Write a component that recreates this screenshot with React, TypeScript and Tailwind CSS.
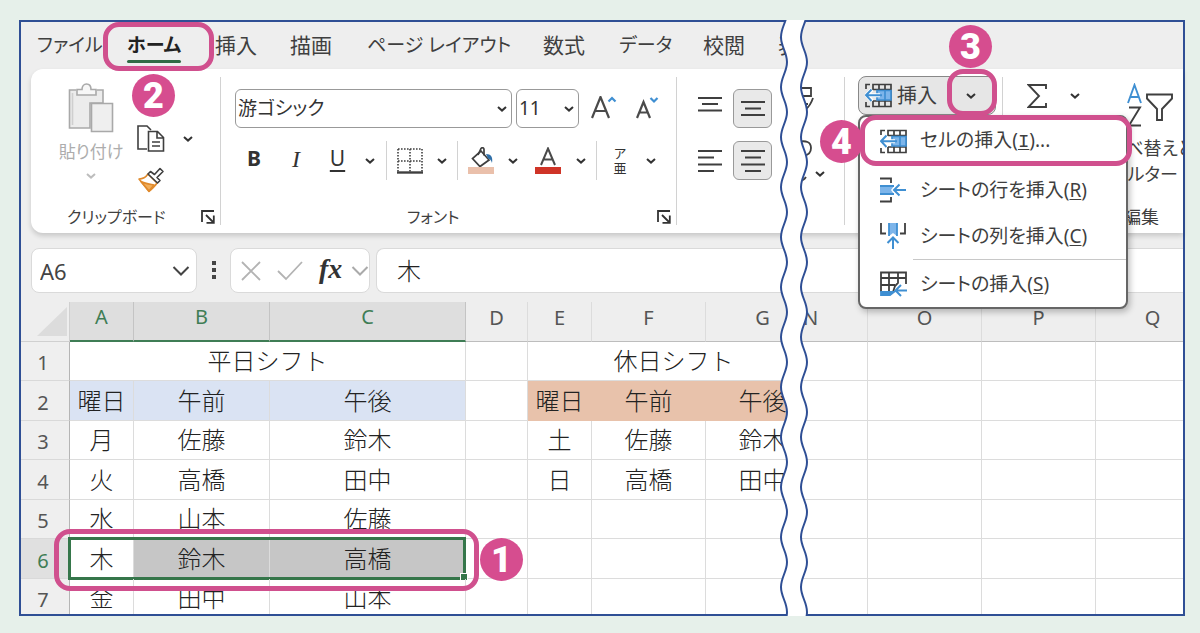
import type { ReactNode } from 'react'
import clsx from 'clsx'

const BLUE = '#3f8fd2'
const INK = '#3f3f3f'

const tabs = [
  { name: 'ファイル', kana: true },
  { name: 'ホーム', kana: true },
  { name: '挿入' },
  { name: '描画' },
  { name: 'ページ レイアウト', kana: true },
  { name: '数式' },
  { name: 'データ', kana: true },
  { name: '校閲' },
  { name: '表示' },
]

type Row = { n: number; week: string[]; holiday: string[] }

const rows: Row[] = [
  { n: 2, week: ['曜日', '午前', '午後'], holiday: ['曜日', '午前', '午後'] },
  { n: 3, week: ['月', '佐藤', '鈴木'], holiday: ['土', '佐藤', '鈴木'] },
  { n: 4, week: ['火', '高橋', '田中'], holiday: ['日', '高橋', '田中'] },
  { n: 5, week: ['水', '山本', '佐藤'], holiday: ['', '', ''] },
  { n: 6, week: ['木', '鈴木', '高橋'], holiday: ['', '', ''] },
  { n: 7, week: ['金', '田中', '山本'], holiday: ['', '', ''] },
]

function rowHeight(n: number) {
  return n % 2 === 0 ? 'h-10' : 'h-[39px]'
}

/* Callouts */

function Ring({ className }: { className: string }) {
  return <span className={clsx('pointer-events-none absolute z-20 rounded-2xl border-[5px] border-[#d0508e]', className)} />
}

function Badge({ n, className }: { n: number; className: string }) {
  return (
    <span
      className={clsx(
        'pointer-events-none absolute z-20 flex size-[43px] items-center justify-center rounded-full bg-[#d64d8f] font-[Roboto,sans-serif] text-[36px] leading-none font-black text-white',
        className,
      )}
    >
      {n}
    </span>
  )
}

/* Icons */

function Chevron({ className = 'text-[#333]' }: { className?: string }) {
  return (
    <svg width="12" height="8" viewBox="0 0 12 8" fill="none" stroke="currentColor" strokeWidth="2" className={clsx('shrink-0', className)}>
      <path d="M2 2l4 3.6L10 2" />
    </svg>
  )
}

function WideChevron({ className }: { className: string }) {
  return (
    <svg width="18" height="12" viewBox="0 0 18 12" fill="none" stroke="currentColor" strokeWidth="2" className={clsx('shrink-0', className)}>
      <path d="M1.5 2L9 9.5 16.5 2" />
    </svg>
  )
}

function Launcher() {
  return (
    <svg width="14" height="14" viewBox="0 0 14 14" fill="none" stroke="#333" strokeWidth="1.8">
      <path d="M1 12V1h12M5 5l7 7M12.8 5.500V12.800H5.500" />
    </svg>
  )
}

function PasteIcon() {
  return (
    <svg width="46" height="50" viewBox="0 0 46 50" fill="none" stroke="#a9a9a9" strokeWidth="1.6">
      <path d="M8 7H1.500v38H22V20h13V7h-6" fill="#ececec" />
      <path d="M4.500 10v32" stroke="#cfcfcf" />
      <path d="M9 12V6.500h5C14 3 16 1 18.500 1S23 3 23 6.500h5V12z" fill="#f7f7f7" />
      <path d="M23.500 20.500h21v28h-21z" fill="#efefef" />
    </svg>
  )
}

function CopyIcon() {
  return (
    <svg width="28" height="28" viewBox="0 0 28 28" fill="none" stroke={INK} strokeWidth="1.6">
      <path d="M10 24H1V1h9l4 4" />
      <path d="M11.500 6.500h9l6 6V26h-15zM20 6.500V13h6.500M15 17h8M15 21h8" />
    </svg>
  )
}

function BrushIcon() {
  return (
    <svg width="28" height="26" viewBox="0 0 28 26" fill="none" strokeWidth="1.600" strokeLinejoin="round">
      <path d="M2 12c4 0 7-2 9-5l9 9c-2 3-4 5-8 8.500z" fill="#fff" stroke="#e08a2c" />
      <path d="M4 14.500c4 2 8 2.500 13 3.500l-5 6z" fill="#f2ae5a" stroke="#e08a2c" />
      <path d="M11 7l2.500-2.500 4 3L23 1.500l3 3-6 6 3 3-2.500 2.500z" fill="#fff" stroke={INK} />
    </svg>
  )
}

function BordersIcon() {
  return (
    <svg width="26" height="26" viewBox="0 0 26 26" fill="none" stroke={INK} strokeWidth="1.600">
      <path d="M1 1h24M1 13h24M1 1v23M13 1v23M25 1v23" strokeDasharray="1.600 1.400" />
      <path d="M0 24.500h26" strokeWidth="2.400" />
    </svg>
  )
}

function BucketIcon() {
  return (
    <svg width="28" height="28" viewBox="0 0 28 28" fill="none" strokeWidth="1.700">
      <path d="M14 4l8 9-9 6.500-7.500-8L14 4z" stroke={INK} />
      <path d="M11 8l3-6.500c1.500-1.500 3-.5 3 1v6" stroke={INK} />
      <path d="M19 7c5 0 7 3 6 9-1-3-2-4-4-4.500z" fill="#2f6fa8" />
      <path d="M1 20h26v7H1z" fill="#eac0ab" />
    </svg>
  )
}

function FontColorIcon() {
  return (
    <svg width="28" height="28" viewBox="0 0 28 28" fill="none" strokeWidth="2">
      <path d="M7 18L14 1.500 21 18M9.500 12.500h9" stroke="#4a4a4a" />
      <path d="M1 20h26v7H1z" fill="#cf3427" />
    </svg>
  )
}

function LinesIcon({ d }: { d: string }) {
  return (
    <svg width="24" height="24" viewBox="0 0 24 24" fill="none" stroke={INK} strokeWidth="1.900">
      <path d={d} />
    </svg>
  )
}

function InsertCellsIcon() {
  return (
    <svg width="28" height="25" viewBox="0 0 28 25" fill="none" stroke={INK} strokeWidth="1.700">
      <path d="M5 1.500H1V6M1 19v4.500h4M8 7V1.500h18v22H8V18M14 1.500v22M20 1.500v22M8 6.500h18M8 18h18" />
      <path d="M12 7.500h14v9.500H12z" fill="#7db5ea" stroke={BLUE} />
      <path d="M20 7.500v9.500" stroke={BLUE} />
      <path d="M15 12.200H2M7 6.500L1.500 12.200 7 18" stroke="#fff" strokeWidth="4" />
      <path d="M17 12.200H1M6.500 6.500L1 12.200 6.500 18" stroke={BLUE} strokeWidth="2" />
    </svg>
  )
}

function InsertRowIcon() {
  return (
    <svg width="28" height="26" viewBox="0 0 28 26" fill="none" stroke={INK} strokeWidth="1.800">
      <path d="M0 1.500h11V6M0 24.500h11V20" />
      <path d="M0 9h14l-3 4 3 4H0z" fill="#7db5ea" stroke="none" />
      <path d="M0 9h14M0 17h14" stroke={BLUE} />
      <path d="M26 13H15M19.500 7.500L14 13l5.500 5.500" stroke={BLUE} strokeWidth="2" />
    </svg>
  )
}

function InsertColumnIcon() {
  return (
    <svg width="28" height="26" viewBox="0 0 28 26" fill="none" stroke={INK} strokeWidth="1.800">
      <path d="M1 0v10.500h5M25 0v10.500h-5" />
      <path d="M9 0h8v13l-4-3-4 3z" fill="#7db5ea" stroke="none" />
      <path d="M9 0v13M17 0v13" stroke={BLUE} />
      <path d="M13 26V15M7.500 20L13 14.500 18.500 20" stroke={BLUE} strokeWidth="2" />
    </svg>
  )
}

function InsertSheetIcon() {
  return (
    <svg width="28" height="26" viewBox="0 0 28 26" fill="none" stroke={INK} strokeWidth="1.800">
      <path d="M1 21V1.500h25V13M1 7h25M1 14h14M9 1.500V21M18 1.500V12l-3 3-2 6H1" />
      <path d="M1 21h13l-4 3H1z" fill={BLUE} stroke={BLUE} />
      <path d="M27 19.500H17M21 14l-5.500 5.500L21 25" stroke={BLUE} strokeWidth="2" />
    </svg>
  )
}

function SigmaIcon() {
  return (
    <svg width="22" height="26" viewBox="0 0 22 26" fill="none" stroke={INK} strokeWidth="1.900">
      <path d="M19 6V2H1.500L12 13 1.500 24H19v-4" />
    </svg>
  )
}

function SortFilterIcon() {
  return (
    <svg width="48" height="44" viewBox="0 0 48 44" fill="none" strokeWidth="1.900">
      <path d="M2 20L8.500 2 15 20M4.500 14h8" stroke={BLUE} />
      <path d="M3 24.500h11L3 42.500h12" stroke={INK} />
      <path d="M21 11.500h25v4L36 26v11h-5V26L21 15.500z" stroke={INK} />
    </svg>
  )
}

/* Torn edge between the two halves of the window: a period of 50px, long enough for any height */
function wave(x: number, down: boolean) {
  const right = x + 6
  const out = down ? [`M${x} -33`] : [`M${x} 617`]
  const step = down ? 25 : -25
  let y = down ? -33 : 617
  for (let i = 0; i < 26; i++) {
    const from = i % 2 === 0 ? x : right
    const to = i % 2 === 0 ? right : x
    out.push(`C${from} ${y + step * 0.4} ${to} ${y + step * 0.6} ${to} ${y + step}`)
    y += step
  }
  return out.join(' ')
}

function Tear() {
  return (
    <div className="relative z-30 w-0">
      <svg className="absolute -top-0.5 -left-3 h-[calc(100%+4px)] w-[30px]" fill="none">
        <path d={`${wave(1, true)} ${wave(21, false).replace('M', 'L')} Z`} fill="#fff" />
        <path d={wave(1, true)} stroke="#2f4f95" strokeWidth="2" />
        <path d={wave(21, true)} stroke="#2f4f95" strokeWidth="2" />
      </svg>
    </div>
  )
}

/* Ribbon */

function Separator({ className }: { className?: string }) {
  return <span className={clsx('w-px shrink-0 self-stretch bg-[#d2d2d2]', className)} />
}

function ToolButton({ label, className, children }: { label: string; className?: string; children: ReactNode }) {
  return (
    <button type="button" aria-label={label} className={clsx('flex shrink-0 items-center justify-center text-[#333]', className)}>
      {children}
    </button>
  )
}

function ComboBox({ label, value, className }: { label: string; value: string; className: string }) {
  return (
    <div className={clsx('relative shrink-0', className)}>
      <select
        aria-label={label}
        defaultValue={value}
        className="h-[39px] w-full appearance-none rounded-md border border-[#999] bg-white pl-0.5 text-[19px] leading-none text-[#333]"
      >
        <option>{value}</option>
      </select>
      <span className="pointer-events-none absolute inset-y-0 right-1 flex items-center">
        <Chevron />
      </span>
    </div>
  )
}

function GroupFooter({ title, className, launcher }: { title: string; className: string; launcher?: boolean }) {
  return (
    <div className={clsx('flex h-4 items-center justify-between pr-[5px] leading-none whitespace-nowrap', className)}>
      {title}
      {launcher && (
        <button type="button" aria-label={`${title}の設定`}>
          <Launcher />
        </button>
      )}
    </div>
  )
}

function ClipboardGroup() {
  return (
    <div className="flex w-[189px] shrink-0 flex-col justify-between">
      <div className="flex">
        <button type="button" className="ml-[18px] flex w-[84px] flex-col items-center pt-1.5 text-[17px] leading-none text-[#adadad]">
          <PasteIcon />
          <span className="mt-2.5 mb-3 whitespace-nowrap">貼り付け</span>
          <Chevron className="text-[#bdbdbd]" />
        </button>
        <div className="flex flex-col items-start gap-3.5 pt-12 pl-1">
          <div className="flex items-center gap-[17px]">
            <ToolButton label="コピー">
              <CopyIcon />
            </ToolButton>
            <ToolButton label="コピーのオプション">
              <Chevron />
            </ToolButton>
          </div>
          <ToolButton label="書式のコピー">
            <BrushIcon />
          </ToolButton>
        </div>
      </div>
      <GroupFooter title="クリップボード" className="pl-9 text-base" launcher />
    </div>
  )
}

function FontGroup() {
  return (
    <div className="flex w-[455px] shrink-0 flex-col">
      <div className="mt-3 flex items-center pl-3.5">
        <ComboBox label="フォント" value="游ゴシック" className="w-[277px]" />
        <ComboBox label="フォント サイズ" value="11" className="ml-1 w-[63px]" />
        <ToolButton label="フォント サイズの拡大" className="ml-3">
          <svg width="28" height="26" viewBox="0 0 28 26" fill="none" strokeWidth="2.200">
            <path d="M1 22L9.500 1 18 22M4 15h11" stroke="#4a4a4a" />
            <path d="M17.500 5.500L21 2l3.500 3.500" stroke={BLUE} />
          </svg>
        </ToolButton>
        <ToolButton label="フォント サイズの縮小" className="ml-[17px]">
          <svg width="28" height="26" viewBox="0 0 28 26" fill="none" strokeWidth="2.200">
            <path d="M1 22L7.500 6 14 22M3.500 16.500h8.500" stroke="#4a4a4a" />
            <path d="M14.500 2L18 5.500 21.500 2" stroke={BLUE} />
          </svg>
        </ToolButton>
      </div>
      <div className="mt-[13px] flex h-[39px] items-center pl-3 text-[21px] leading-none">
        <ToolButton label="太字" className="w-[42px] pb-1 font-bold">B</ToolButton>
        <ToolButton label="斜体" className="w-[42px] pb-1 font-['Liberation_Serif',serif] text-2xl leading-none italic">I</ToolButton>
        <ToolButton label="下線" className="w-[41px] pb-1 underline underline-offset-4">U</ToolButton>
        <ToolButton label="下線の種類" className="w-6"><Chevron /></ToolButton>
        <Separator className="ml-1" />
        <ToolButton label="罫線" className="w-[46px]"><BordersIcon /></ToolButton>
        <ToolButton label="罫線の種類" className="w-[18px]"><Chevron /></ToolButton>
        <Separator className="ml-1.5" />
        <ToolButton label="塗りつぶしの色" className="w-[46px]"><BucketIcon /></ToolButton>
        <ToolButton label="塗りつぶしの色の一覧" className="w-[18px]"><Chevron /></ToolButton>
        <ToolButton label="フォントの色" className="w-[52px]"><FontColorIcon /></ToolButton>
        <ToolButton label="フォントの色の一覧" className="w-3.5"><Chevron /></ToolButton>
        <Separator className="ml-2" />
        <ToolButton label="ふりがなの表示" className="w-[46px] flex-col text-[13px] leading-[15px]">
          <span>ア</span>
          <span>亜</span>
        </ToolButton>
        <ToolButton label="ふりがなの設定" className="w-4"><Chevron /></ToolButton>
      </div>
      <GroupFooter title="フォント" className="mt-auto pl-[186px] text-base" launcher />
    </div>
  )
}

function AlignGroup() {
  const pressed = 'size-[39px] rounded-md border border-[#999] bg-[#e9e9e9]'
  return (
    <div className="flex shrink-0 flex-col gap-[13px] pt-3 pl-[21px]">
      <div className="flex gap-[11px]">
        <ToolButton label="上揃え"><LinesIcon d="M0 1h24M4 7h16M0 13.500h24" /></ToolButton>
        <ToolButton label="上下中央揃え" className={pressed}><LinesIcon d="M0 5h24M4 11.500h16M0 18h24" /></ToolButton>
      </div>
      <div className="flex gap-[11px]">
        <ToolButton label="左揃え"><LinesIcon d="M0 2h24M0 8.500h16M0 15.500h24M0 22h16" /></ToolButton>
        <ToolButton label="中央揃え" className={pressed}><LinesIcon d="M0 2h24M4 8.500h16M0 15.500h24M4 22h16" /></ToolButton>
      </div>
    </div>
  )
}

function MenuItem({ icon, text, accel, tail = '' }: { icon: ReactNode; text: string; accel: string; tail?: string }) {
  return (
    <button type="button" role="menuitem" className="flex h-[46px] w-full items-center gap-3 pl-5 text-left whitespace-nowrap">
      {icon}
      <span>
        {text}(
        <span className={clsx('underline underline-offset-2', accel === 'I' && "font-['Liberation_Mono',monospace]")}>{accel}</span>
        ){tail}
      </span>
    </button>
  )
}

function InsertMenu() {
  return (
    <div
      role="menu"
      className="absolute top-full left-0 z-10 w-[270px] rounded-lg border-2 border-[#666] bg-white pt-px text-[19px] leading-none shadow-[2px_3px_6px_rgba(0,0,0,0.25)]"
    >
      <Ring className="-top-0.5 -right-1.5 left-0 h-[51px]" />
      <Badge n={4} className="top-[3px] -left-10" />
      <MenuItem icon={<InsertCellsIcon />} text="セルの挿入" accel="I" tail="..." />
      <div className="pt-[3px]">
        <MenuItem icon={<InsertRowIcon />} text="シートの行を挿入" accel="R" />
        <MenuItem icon={<InsertColumnIcon />} text="シートの列を挿入" accel="C" />
      </div>
      <hr className="mb-px ml-[53px] border-[#c8c8c8]" />
      <MenuItem icon={<InsertSheetIcon />} text="シートの挿入" accel="S" />
    </div>
  )
}

/* Sheet */

function ColumnHeader({ name, className, selected }: { name: string; className: string; selected?: boolean }) {
  return (
    <th
      scope="col"
      className={clsx(
        'h-10 border-r font-normal',
        className,
        selected
          ? 'border-r-[#c4c4c4] border-b-2 border-b-[#3f7d55] bg-[#dedede] pb-2 text-[#3f7d55]'
          : 'border-r-[#dcdcdc] border-b border-b-[#bdbdbd] bg-[#eeeeee] pb-2 text-[#555]',
      )}
    >
      {name}
    </th>
  )
}

function RowHeader({ n }: { n: number }) {
  return (
    <th
      scope="row"
      className={clsx(
        'border-r border-b border-r-[#b5b5b5] border-b-[#d9d9d9] pt-1 pr-1 font-normal',
        rowHeight(n),
        n === 6 ? 'bg-[#e0e0e0] text-[#3f7d55]' : 'bg-[#efefef] text-[#555]',
      )}
    >
      {n}
    </th>
  )
}

const cell = 'border-r border-b border-[#dcdcdc]'
const cellText = "pb-0.5 font-['Noto_Sans_CJK_JP',sans-serif] text-2xl leading-none font-light text-[#222] [font-feature-settings:normal]"

function weekFill(n: number, col: number) {
  if (n === 2) return 'bg-[#dae3f3] border-[#dae3f3]'
  if (n === 6 && col > 0) return 'bg-[#c6c6c6] border-[#b9b9b9]'
  return ''
}

function ShiftSheet() {
  return (
    <div className="h-[312px] overflow-hidden bg-white">
      <table className="w-[799px] table-fixed border-separate border-spacing-0 text-center text-xl leading-none">
        <thead>
          <tr>
            <th className="w-[49px] border-r border-b border-[#d0d0d0] bg-[#eeeeee] p-0">
              <svg width="30" height="29" viewBox="0 0 30 29" className="ml-4">
                <path d="M30 0v29H0z" fill="#dcdcdc" />
              </svg>
            </th>
            <ColumnHeader name="A" className="w-[64px]" selected />
            <ColumnHeader name="B" className="w-[136px]" selected />
            <ColumnHeader name="C" className="w-[196px]" selected />
            <ColumnHeader name="D" className="w-[62px]" />
            <ColumnHeader name="E" className="w-[64px]" />
            <ColumnHeader name="F" className="w-[114px]" />
            <ColumnHeader name="G" className="w-[114px]" />
          </tr>
        </thead>
        <tbody>
          <tr>
            <RowHeader n={1} />
            <td colSpan={3} className={clsx(cell, cellText)}>平日シフト</td>
            <td className={cell} />
            <td colSpan={3} className={clsx(cell, cellText)}>休日シフト</td>
          </tr>
          {rows.map(({ n, week, holiday }) => (
            <tr key={n}>
              <RowHeader n={n} />
              {week.map((text, i) => (
                <td key={i} className={clsx(cell, cellText, 'relative', weekFill(n, i))}>
                  {text}
                  {n === 6 && i === 2 && (
                    <>
                      <span className="absolute -top-0.5 -right-px -bottom-0.5 w-[398px] border-[3px] border-[#35764a]" />
                      <span className="absolute -right-[3px] -bottom-[3px] size-2 border border-white bg-[#35764a]" />
                      <Ring className="-top-2.5 -right-3.5 h-[62px] w-[425px]" />
                      <Badge n={1} className="-top-px -right-[58px]" />
                    </>
                  )}
                </td>
              ))}
              <td className={cell} />
              {holiday.map((text, i) => (
                <td key={i} className={clsx(cell, cellText, n === 2 && 'border-[#e8c2ab] bg-[#e8c2ab]')}>
                  {text}
                </td>
              ))}
            </tr>
          ))}
        </tbody>
      </table>
    </div>
  )
}

function EmptySheet() {
  return (
    <div className="h-[312px] overflow-hidden bg-white">
      <table className="-ml-[38px] w-[456px] table-fixed border-separate border-spacing-0 text-center text-xl leading-none">
        <thead>
          <tr>
            {['N', 'O', 'P', 'Q'].map((name) => (
              <ColumnHeader key={name} name={name} className="w-[114px]" />
            ))}
          </tr>
        </thead>
        <tbody>
          {[1, 2, 3, 4, 5, 6, 7].map((n) => (
            <tr key={n}>
              {[0, 1, 2, 3].map((i) => (
                <td key={i} className={clsx(cell, rowHeight(n))} />
              ))}
            </tr>
          ))}
        </tbody>
      </table>
    </div>
  )
}

const ribbonCard = 'flex h-[164px] bg-white py-2 shadow-[0_3px_5px_rgba(0,0,0,0.16)]'

function LeftPane() {
  return (
    <div className="w-[771px] shrink-0 overflow-hidden">
      <nav className="grid h-[47px] grid-cols-[90px_88px_75px_77px_176px_76px_84px_75px_44px] items-center pl-4 leading-none whitespace-nowrap">
        {tabs.map(({ name, kana }) =>
          name === 'ホーム' ? (
            <div key={name} className="relative">
              <button type="button" className="relative text-[19px] leading-none font-bold text-[#222]">
                {name}
                <span className="absolute inset-x-0 -bottom-2 h-[3px] rounded bg-[#2f6b45]" />
              </button>
              <Ring className="-top-3.5 -left-6 h-[49px] w-[111px]" />
              <Badge n={2} className="top-[38px] left-[5px]" />
            </div>
          ) : (
            <button key={name} type="button" className={clsx('text-left leading-none', kana ? 'text-[19px]' : 'text-[21px]')}>
              {name}
            </button>
          ),
        )}
      </nav>

      <div className={clsx(ribbonCard, 'ml-2.5 rounded-l-xl')}>
        <ClipboardGroup />
        <Separator />
        <FontGroup />
        <Separator />
        <AlignGroup />
      </div>

      {/* Formula bar */}
      <div className="mt-[15px] mb-[9px] ml-2.5 flex h-[45px] items-stretch">
        <div className="flex w-[166px] items-center justify-between rounded-lg border border-[#dadada] bg-white pr-1.5 pl-2">
          <input aria-label="名前ボックス" defaultValue="A6" className="w-24 text-[22px] leading-none text-[#444] outline-none" />
          <WideChevron className="text-[#444]" />
        </div>
        <svg width="33" height="44" viewBox="0 0 33 44" fill="#444">
          <path d="M15 13h4v4h-4zM15 20h4v4h-4zM15 27h4v4h-4z" />
        </svg>
        <div className="flex w-[140px] items-center rounded-lg border border-[#dadada] bg-white pl-2.5">
          <ToolButton label="キャンセル">
            <svg width="20" height="20" viewBox="0 0 20 20" fill="none" stroke="#b3b3b3" strokeWidth="1.800">
              <path d="M1 1l18 18M19 1L1 19" />
            </svg>
          </ToolButton>
          <ToolButton label="入力" className="ml-4">
            <svg width="26" height="20" viewBox="0 0 26 20" fill="none" stroke="#b3b3b3" strokeWidth="1.800">
              <path d="M1 10l8 8L25 1" />
            </svg>
          </ToolButton>
          <ToolButton label="関数の挿入" className="ml-4 pb-1 font-['Liberation_Serif',serif] text-[28px] leading-none font-bold italic">fx</ToolButton>
          <WideChevron className="ml-auto text-[#aaa]" />
        </div>
        <input
          aria-label="数式バー"
          defaultValue="木"
          className={clsx(cellText, 'ml-1.5 min-w-0 flex-1 rounded-l-lg border border-r-0 border-[#dadada] bg-white pl-5 outline-none')}
        />
      </div>

      <ShiftSheet />
    </div>
  )
}

function RightPane() {
  return (
    <div className="min-w-0 flex-1">
      <div className="h-[47px]" />
      <div className={clsx(ribbonCard, 'relative z-10')}>
        {/* Style buttons cut off by the torn edge */}
        <div className="w-[52px] shrink-0">
          <svg width="52" height="110" viewBox="0 0 52 110" fill="none" stroke={INK} strokeWidth="1.800">
            <path d="M6 11h13v8H8M21 21c-2 6-4 9-8 12M6 27h10M6 65c8-2 13 0 13 6 0 4-3 7-7 8M14 100c-2 3-4 4-7 4" />
            <path d="M24 95l4 3.600 4-3.600" strokeWidth="2" stroke="#333" />
          </svg>
        </div>
        <Separator />
        <div className="relative -mt-px ml-[13px] h-[39px] w-[138px] shrink-0">
          <div className="flex h-full rounded-lg border border-[#888] bg-[#e6e6e6]">
            <button type="button" className="flex w-[94px] items-center gap-1 pl-1.5 text-xl leading-none whitespace-nowrap">
              <InsertCellsIcon />
              挿入
            </button>
            <ToolButton label="挿入メニュー" className="w-9">
              <Chevron />
            </ToolButton>
          </div>
          <Ring className="-top-[7px] left-[89px] h-[47px] w-[50px]" />
          <Badge n={3} className="-top-[51px] left-[91px]" />
          <InsertMenu />
        </div>
        <Separator className="ml-1.5" />
        <div className="relative flex min-w-0 flex-1 flex-col overflow-hidden">
          <div className="flex">
            <div className="flex h-[37px] w-24 shrink-0 items-center gap-5 pl-6">
              <ToolButton label="オート SUM"><SigmaIcon /></ToolButton>
              <ToolButton label="オート SUM の一覧"><Chevron /></ToolButton>
            </div>
            <button type="button" className="flex shrink-0 flex-col items-center pt-1.5 text-[18px] leading-[26px] whitespace-nowrap">
              <span className="pb-2"><SortFilterIcon /></span>
              <span>並べ替えと</span>
              <span className="flex items-center gap-3">
                フィルター
                <Chevron />
              </span>
            </button>
          </div>
          <GroupFooter title="編集" className="mt-auto pl-[120px] text-[18px]" />
        </div>
      </div>
      <div className="mt-[15px] mb-[9px] h-[45px] border-y border-[#dadada] bg-white" />
      <EmptySheet />
    </div>
  )
}

export default function App() {
  return (
    <main className="min-h-screen bg-[#e6f0ea] pt-5 pr-[15px] pb-[17px] pl-[19px]">
      <div className="flex border-2 border-[#2f4f95] bg-[#eeeeee] font-['Noto_Sans','Noto_Sans_CJK_JP',sans-serif] text-[#3f3f3f] [font-feature-settings:'palt']">
        <LeftPane />
        <Tear />
        <RightPane />
      </div>
    </main>
  )
}
